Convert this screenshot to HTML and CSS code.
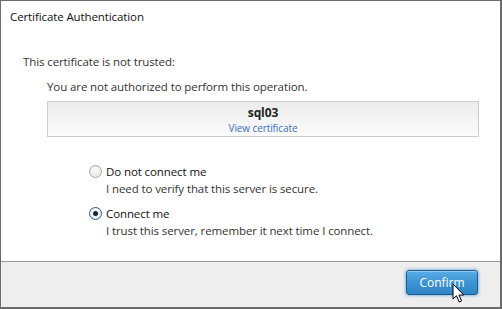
FILE: index.html
```html
<!DOCTYPE html>
<html lang="en">
<head>
    <meta charset="UTF-8">
    <title>Certificate Authentication</title>
    <link rel="stylesheet" href="styles.css">
</head>
<body>
    <div class="dialog">
        <div class="dialog-title">Certificate Authentication</div>

        <div class="dialog-body">
            <p class="intro">This certificate is not trusted:</p>
            <p class="reason">You are not authorized to perform this operation.</p>

            <div class="cert-box">
                <div class="cert-name">sql03</div>
                <a class="cert-link" href="#">View certificate</a>
            </div>

            <div class="options">
                <label class="option">
                    <span class="radio"></span>
                    <span class="option-text">
                        <span class="option-label">Do not connect me</span>
                        <span class="option-desc">I need to verify that this server is secure.</span>
                    </span>
                </label>
                <label class="option">
                    <span class="radio checked"></span>
                    <span class="option-text">
                        <span class="option-label">Connect me</span>
                        <span class="option-desc">I trust this server, remember it next time I connect.</span>
                    </span>
                </label>
            </div>
        </div>

        <div class="dialog-footer">
            <button class="confirm-btn">Confirm</button>
            <!-- cursor sobre el boton -->
            <svg class="cursor" width="14" height="21" viewBox="0 0 14 21">
                <path d="M1 1 L1 16 L4.5 12.8 L7.2 19 L9.6 18 L7 12 L11.8 12 Z" fill="#fff" stroke="#000" stroke-width="1" stroke-linejoin="miter"/>
            </svg>
        </div>
    </div>
</body>
</html>
```

FILE: styles.css
```css
* {
    margin: 0;
    padding: 0;
    box-sizing: border-box;
}

body {
    font-family: 'Open Sans', 'Noto Sans', sans-serif;
    font-size: 11.5px;
    line-height: 16px;
    letter-spacing: -0.1px;
    color: #1e1e1e;
    background: white;
}

.dialog {
    width: 502px;
    height: 309px;
    border-style: solid;
    border-color: #6b6b6b;
    border-width: 1px 2px 2px 1px;
    display: flex;
    flex-direction: column;
    background: white;
}

.dialog-title {
    padding: 8px 0 0 9px;
    height: 53px;
    color: #111;
}

.dialog-body {
    flex: 1;
    padding: 0 0 0 22px;
}

.intro {
    color: #333;
    margin-bottom: 9px;
}

.reason {
    color: #333;
    padding-left: 24px;
    margin-bottom: 6px;
}

.cert-box {
    margin-left: 24px;
    width: 432px;
    height: 36px;
    border: 1px solid #cdcdcd;
    background: linear-gradient(180deg, #ececec 0%, #fbfbfb 100%);
    text-align: center;
    display: flex;
    flex-direction: column;
    align-items: center;
    padding-top: 3px;
}

.cert-name {
    font-weight: 700;
    font-size: 12px;
    line-height: 16px;
    color: #222;
}

.cert-link {
    font-size: 10px;
    line-height: 14px;
    color: #3a6fc4;
    text-decoration: none;
}

.options {
    margin: 26px 0 0 66px;
    display: flex;
    flex-direction: column;
    gap: 8px;
}

.option {
    display: flex;
    gap: 4px;
}

.option-text {
    display: flex;
    flex-direction: column;
    line-height: 17px;
}

.option-label {
    color: #111;
}

.option-desc {
    color: #333;
}

.radio {
    width: 13px;
    height: 13px;
    margin-top: 2px;
    border-radius: 50%;
    border: 1px solid #a8a8a8;
    background: radial-gradient(circle at 50% 35%, #fafafa 0%, #e2e2e2 100%);
    position: relative;
}

.radio.checked {
    border-color: #2a5d8f;
    background: radial-gradient(circle at 50% 35%, #fdfdfd 0%, #dfe9f3 100%);
}

.radio.checked::after {
    content: '';
    position: absolute;
    left: 3px;
    top: 3px;
    width: 5px;
    height: 5px;
    border-radius: 50%;
    background: #222;
}

.dialog-footer {
    height: 46px;
    border-top: 1px solid #9a9a9a;
    background: #efeeee;
    display: flex;
    justify-content: flex-end;
    align-items: flex-start;
    padding: 8px 22px 0 0;
    position: relative;
}

.confirm-btn {
    width: 72px;
    height: 25px;
    font-family: 'Open Sans', 'Noto Sans', sans-serif;
    font-size: 12px;
    color: white;
    border: 1px solid #1d5b8a;
    border-radius: 3px;
    background: linear-gradient(180deg, #5aaee6 0%, #3d94d3 50%, #2f83c4 100%);
    box-shadow: 0 0 3px 1px rgba(60, 140, 210, 0.55), inset 0 1px 0 rgba(255, 255, 255, 0.35);
    cursor: pointer;
}

.cursor {
    position: absolute;
    left: 451px;
    top: 21px;
}
```
